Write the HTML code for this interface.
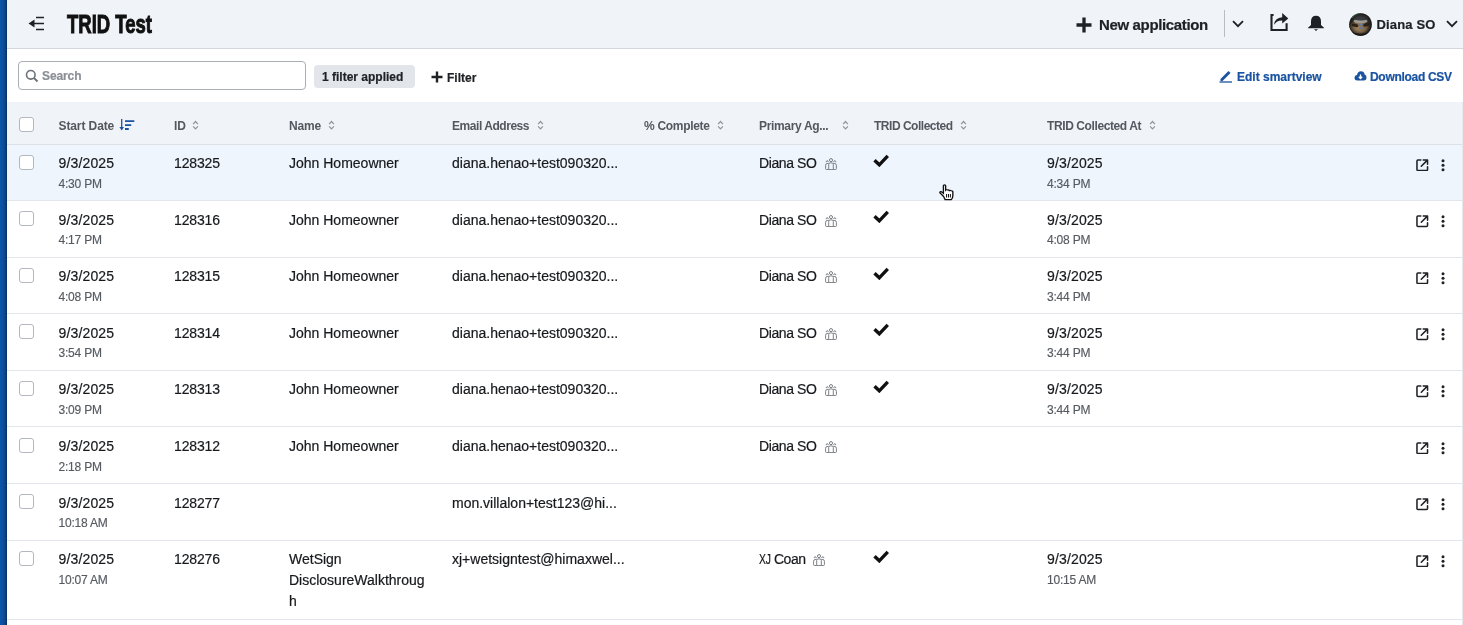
<!DOCTYPE html>
<html><head><meta charset="utf-8">
<style>
*{margin:0;padding:0;box-sizing:border-box}
body{will-change:transform}
html,body{width:1463px;height:625px;overflow:hidden;background:#fff;font-family:"Liberation Sans",sans-serif;color:#1b1d21;position:relative}
.bar{position:absolute;left:0;top:0;width:7px;height:625px;background:linear-gradient(to right,#0c56a8 0,#0b4c99 55%,#093f80 80%,#072d5c 100%);z-index:10}
.hdr{position:absolute;left:0;top:0;width:1463px;height:49px;background:#f0f3f8;border-bottom:1px solid #d3d7dd}
.title{position:absolute;left:66.5px;top:9.1px;font-weight:bold;font-size:26px;line-height:30px;transform:scaleX(0.712);transform-origin:0 0;color:#111;letter-spacing:0;-webkit-text-stroke:1px #111}
.abs{position:absolute}
.btxt{position:absolute;font-weight:bold;white-space:nowrap;-webkit-text-stroke:0.2px currentColor}
.search{position:absolute;left:18px;top:61px;width:288px;height:29px;border:1px solid #a9aeb5;border-radius:4px;background:#fff}
.chip{position:absolute;left:314px;top:65px;width:101px;height:23px;border-radius:4px;background:#e2e5e9}
.th{position:absolute;left:0;top:102px;width:1463px;height:43px;background:#f0f3f8;border-bottom:1px solid #dde1e6}
.hl{position:absolute;top:17px;font-weight:bold;font-size:12px;line-height:14px;color:#53585f;white-space:nowrap;letter-spacing:-0.2px}
.si{position:absolute;top:18.2px}
.cb{position:absolute;width:15px;height:15px;border:1px solid #b3b8bf;border-radius:3px;background:#fff}
.row{position:absolute;left:0;width:1463px;border-bottom:1px solid #e3e6ea;background:#fff}
.row.hov{background:#eef5fd}

.t1{position:absolute;top:9.6px;font-size:14px;line-height:19px;white-space:nowrap;color:#17191c;-webkit-text-stroke:0.2px #17191c}
.dt{letter-spacing:0.15px}
.t2{position:absolute;top:31px;font-size:12px;line-height:16px;white-space:nowrap;color:#555a61;letter-spacing:-0.2px;-webkit-text-stroke:0.15px #555a61}
.tm{display:inline-block;vertical-align:top;margin-left:8px;margin-top:4px;line-height:0}
.ck{position:absolute;top:9px;line-height:0}
.op{position:absolute;left:1416px;top:14.2px;line-height:0}
.kb{position:absolute;left:1441px;top:14px;line-height:0}
.blue{color:#1a53a1}
</style></head><body>
<div class="bar"></div>
<div class="abs" style="left:1462px;top:102px;width:1px;height:523px;background:#e8e9ec;z-index:5"></div>
<div class="hdr">
  <svg class="abs" style="left:28px;top:16px" width="17" height="15" viewBox="0 0 17 15"><path d="M0.5 7.5 L6.5 3.5 V11.5 Z" fill="#1e2125"/><path d="M5 7.5 H16 M8 1.6 H16 M8 13.4 H16" stroke="#1e2125" stroke-width="1.5"/></svg>
  <div class="title">TRID Test</div>
  <svg class="abs" style="left:1076px;top:17px" width="16" height="16" viewBox="0 0 16 16"><path d="M8 0.5 V15.5 M0.5 8 H15.5" stroke="#1e2125" stroke-width="3.3"/></svg>
  <div class="btxt" style="left:1099px;top:16px;font-size:15px;line-height:18px;color:#1e2125;letter-spacing:-0.35px">New application</div>
  <div class="abs" style="left:1224px;top:10px;width:1px;height:27px;background:#b9bdc3"></div>
  <svg class="abs" style="left:1232px;top:20px" width="12" height="8" viewBox="0 0 12 8"><path d="M1 1.2 L6 6.2 L11 1.2" fill="none" stroke="#1e2125" stroke-width="1.8"/></svg>
  <svg class="abs" style="left:1270px;top:12px" width="20" height="20" viewBox="0 0 20 20"><path d="M3.6 3 H1.5 V18 H16.6 V11.3" fill="none" stroke="#1e2125" stroke-width="2.1"/><path d="M4 12.8 Q4.6 5.8 12.2 5.2 V1 L18.3 6.6 L12.2 11.6 V8.4 Q6.8 8.2 4 12.8 Z" fill="#1e2125"/></svg>
  <svg class="abs" style="left:1307px;top:15px" width="18" height="17" viewBox="0 0 18 17"><path d="M9 0.8 Q14 0.8 14 6.5 V10 L17 12.8 V13.3 H1 V12.8 L4 10 V6.5 Q4 0.8 9 0.8 Z" fill="#1e2125"/><path d="M7 14.3 H11 L9 16 Z" fill="#1e2125"/></svg>
  <svg class="abs" style="left:1349px;top:12.5px" width="23" height="23" viewBox="0 0 23 23"><defs><clipPath id="cp"><circle cx="11.5" cy="11.5" r="11.3"/></clipPath><radialGradient id="fg" cx="0.45" cy="0.6" r="0.55"><stop offset="0" stop-color="#9c8362"/><stop offset="0.6" stop-color="#7a6248"/><stop offset="1" stop-color="#3a3028"/></radialGradient><radialGradient id="vg" cx="0.5" cy="0.5" r="0.5"><stop offset="0.6" stop-color="#000" stop-opacity="0"/><stop offset="1" stop-color="#000" stop-opacity="0.55"/></radialGradient></defs><g clip-path="url(#cp)"><rect width="23" height="23" fill="#33302d"/><ellipse cx="11" cy="13.5" rx="10.5" ry="7.5" fill="url(#fg)"/><ellipse cx="11.5" cy="8" rx="7" ry="2.4" fill="#a9a7a2" opacity="0.85"/><ellipse cx="12" cy="4.5" rx="9" ry="3" fill="#3b3b3e"/><ellipse cx="6" cy="12.3" rx="3.4" ry="1.6" fill="#2a2119" transform="rotate(15 6 12.3)"/><ellipse cx="17.3" cy="11.8" rx="3.2" ry="1.6" fill="#2a2119" transform="rotate(-15 17.3 11.8)"/><ellipse cx="12.2" cy="11.8" rx="1.4" ry="1" fill="#5a7fb0"/><ellipse cx="11.8" cy="15.2" rx="1.7" ry="0.9" fill="#5676a8"/><path d="M0 18.5 Q11.5 23 23 18.5 V23 H0 Z" fill="#2e2a26"/><rect width="23" height="23" fill="url(#vg)"/></g><path d="M3 5 A11.2 11.2 0 0 1 9 0.5" fill="none" stroke="#56b883" stroke-width="0.8" opacity="0.6"/></svg>
  <div class="btxt" style="left:1376.5px;top:17px;font-size:13px;line-height:16px;color:#1e2125;letter-spacing:0.15px">Diana SO</div>
  <svg class="abs" style="left:1446px;top:20px" width="12" height="8" viewBox="0 0 12 8"><path d="M1 1.2 L6 6.2 L11 1.2" fill="none" stroke="#1e2125" stroke-width="1.8"/></svg>
</div>
<div class="search"></div>
<svg class="abs" style="left:25px;top:68.8px" width="14" height="14" viewBox="0 0 14 14"><circle cx="5.8" cy="5.8" r="4.3" fill="none" stroke="#6b7078" stroke-width="1.6"/><path d="M9 9 L12.5 12.5" stroke="#6b7078" stroke-width="1.8"/></svg>
<div class="btxt" style="left:42px;top:69px;font-size:12px;line-height:14px;color:#8b9097;letter-spacing:-0.1px">Search</div>
<div class="chip"></div>
<div class="btxt" style="left:322px;top:70px;font-size:12px;line-height:14px;color:#1e2125;letter-spacing:0">1 filter applied</div>
<svg class="abs" style="left:431px;top:71px" width="12" height="12" viewBox="0 0 12 12"><path d="M6 0.5 V11.5 M0.5 6 H11.5" stroke="#1e2125" stroke-width="2.4"/></svg>
<div class="btxt" style="left:447px;top:70.7px;font-size:12px;line-height:14px;color:#1e2125">Filter</div>
<svg class="abs" style="left:1219px;top:69px" width="14" height="14" viewBox="0 0 14 14"><path d="M1.5 10 L9.5 2 L11.5 4 L3.5 12 H1.5 Z" fill="#1a53a1"/><path d="M0.5 13 H13" stroke="#1a53a1" stroke-width="1.3"/></svg>
<div class="btxt blue" style="left:1237px;top:69.5px;font-size:12px;line-height:14px;letter-spacing:0">Edit smartview</div>
<svg class="abs" style="left:1354px;top:70px" width="13" height="12" viewBox="0 0 13 12"><path d="M3.2 10.5 Q0.5 10.5 0.5 7.8 Q0.5 5.3 3 5.1 Q3.6 1.3 7 1.3 Q10.2 1.3 10.6 4.6 Q12.5 5 12.5 7.6 Q12.5 10.5 9.8 10.5 Z" fill="#1a53a1"/><path d="M6.5 4.5 V8.3 M4.8 6.8 L6.5 8.6 L8.2 6.8" fill="none" stroke="#fff" stroke-width="1.3"/></svg>
<div class="btxt blue" style="left:1370px;top:69.5px;font-size:12px;line-height:14px;letter-spacing:-0.3px">Download CSV</div>

<div class="th">
  <div class="cb" style="left:19px;top:15px"></div>
  <div class="hl" style="left:58.5px;letter-spacing:-0.1px">Start Date</div>
  <svg class="abs" style="left:119px;top:14.7px" width="16" height="14" viewBox="0 0 16 14"><path d="M2.7 2 V12" stroke="#1a53a1" stroke-width="1.3"/><path d="M0.4 10 L2.7 13.5 L5 10 Z" fill="#1a53a1"/><path d="M6 4.2 H15.3 M6 8.2 H12.2 M6 12 H9.8" stroke="#1a53a1" stroke-width="1.8"/></svg>
  <div class="hl" style="left:174px">ID</div><svg class="si" style="left:192px" width="7" height="10" viewBox="0 0 7 10"><path d="M1.1 4.1 L3.5 1.5 L5.9 4.1 M1.1 6.3 L3.5 8.9 L5.9 6.3" fill="none" stroke="#92969c" stroke-width="1.25"/></svg>
  <div class="hl" style="left:289px">Name</div><svg class="si" style="left:328px" width="7" height="10" viewBox="0 0 7 10"><path d="M1.1 4.1 L3.5 1.5 L5.9 4.1 M1.1 6.3 L3.5 8.9 L5.9 6.3" fill="none" stroke="#92969c" stroke-width="1.25"/></svg>
  <div class="hl" style="left:452px;letter-spacing:-0.45px">Email Address</div><svg class="si" style="left:536.5px" width="7" height="10" viewBox="0 0 7 10"><path d="M1.1 4.1 L3.5 1.5 L5.9 4.1 M1.1 6.3 L3.5 8.9 L5.9 6.3" fill="none" stroke="#92969c" stroke-width="1.25"/></svg>
  <div class="hl" style="left:644px;letter-spacing:-0.3px">% Complete</div><svg class="si" style="left:716.5px" width="7" height="10" viewBox="0 0 7 10"><path d="M1.1 4.1 L3.5 1.5 L5.9 4.1 M1.1 6.3 L3.5 8.9 L5.9 6.3" fill="none" stroke="#92969c" stroke-width="1.25"/></svg>
  <div class="hl" style="left:759px;letter-spacing:-0.33px">Primary Ag...</div><svg class="si" style="left:841.5px" width="7" height="10" viewBox="0 0 7 10"><path d="M1.1 4.1 L3.5 1.5 L5.9 4.1 M1.1 6.3 L3.5 8.9 L5.9 6.3" fill="none" stroke="#92969c" stroke-width="1.25"/></svg>
  <div class="hl" style="left:874px;letter-spacing:-0.48px">TRID Collected</div><svg class="si" style="left:960px" width="7" height="10" viewBox="0 0 7 10"><path d="M1.1 4.1 L3.5 1.5 L5.9 4.1 M1.1 6.3 L3.5 8.9 L5.9 6.3" fill="none" stroke="#92969c" stroke-width="1.25"/></svg>
  <div class="hl" style="left:1047px;letter-spacing:-0.4px">TRID Collected At</div><svg class="si" style="left:1149px" width="7" height="10" viewBox="0 0 7 10"><path d="M1.1 4.1 L3.5 1.5 L5.9 4.1 M1.1 6.3 L3.5 8.9 L5.9 6.3" fill="none" stroke="#92969c" stroke-width="1.25"/></svg>
</div>
<div class="row hov" style="top:144.5px;height:56.6px"><div class="cb" style="left:19px;top:10px"></div><div class="t1 dt" style="left:58.5px">9/3/2025</div><div class="t2" style="left:58.5px">4:30 PM</div><div class="t1" style="left:174px;letter-spacing:-0.15px">128325</div><div class="t1" style="left:289px;top:9.6px">John Homeowner</div><div class="t1" style="left:452px">diana.henao+test090320...</div><div class="t1 ag" style="left:759px"><span style="letter-spacing:-0.4px">Diana SO</span><span class="tm"><svg width="12" height="12" viewBox="0 0 12 12" fill="none" stroke="#74797f" stroke-width="0.95" stroke-linejoin="round"><circle cx="6" cy="2.1" r="1.55"/><path d="M3.7 11.6 V6.4 Q3.7 4.8 6 4.8 Q8.3 4.8 8.3 6.4 V11.6 Z"/><path d="M3.3 4.2 Q3.2 2.6 2.2 2.7 Q1.1 2.8 1.2 4.2 M8.7 4.2 Q8.8 2.6 9.8 2.7 Q10.9 2.8 10.8 4.2"/><path d="M3.7 5.5 H2.1 Q0.6 5.6 0.6 7.3 V10.6 Q0.6 11.5 1.4 11.5 H3.7 M8.3 5.5 H9.9 Q11.4 5.6 11.4 7.3 V10.6 Q11.4 11.5 10.6 11.5 H8.3"/></svg></span></div><div class="ck" style="left:873px"><svg width="16" height="13" viewBox="0 0 16 13"><path d="M1.5 6.3 L6.3 10.8 L14.8 1.8" fill="none" stroke="#111" stroke-width="3.4"/></svg></div><div class="t1 dt" style="left:1047px">9/3/2025</div><div class="t2" style="left:1047px">4:34 PM</div><div class="op"><svg width="12.5" height="12.5" viewBox="0 0 13 13" fill="none" stroke="#1e2125" stroke-width="1.6" stroke-linejoin="round" stroke-linecap="round"><path d="M5 1 H2 Q1 1 1 2 V11 Q1 12 2 12 H11 Q12 12 12 11 V8"/><path d="M7.5 1 H12 V5.5 M11.8 1.2 L5.5 7.5"/></svg></div><div class="kb"><svg width="4" height="13" viewBox="0 0 4 13"><circle cx="2" cy="1.8" r="1.5" fill="#1e2125"/><circle cx="2" cy="6.3" r="1.5" fill="#1e2125"/><circle cx="2" cy="10.8" r="1.5" fill="#1e2125"/></svg></div></div>
<div class="row" style="top:201.1px;height:56.6px"><div class="cb" style="left:19px;top:10px"></div><div class="t1 dt" style="left:58.5px">9/3/2025</div><div class="t2" style="left:58.5px">4:17 PM</div><div class="t1" style="left:174px;letter-spacing:-0.15px">128316</div><div class="t1" style="left:289px;top:9.6px">John Homeowner</div><div class="t1" style="left:452px">diana.henao+test090320...</div><div class="t1 ag" style="left:759px"><span style="letter-spacing:-0.4px">Diana SO</span><span class="tm"><svg width="12" height="12" viewBox="0 0 12 12" fill="none" stroke="#74797f" stroke-width="0.95" stroke-linejoin="round"><circle cx="6" cy="2.1" r="1.55"/><path d="M3.7 11.6 V6.4 Q3.7 4.8 6 4.8 Q8.3 4.8 8.3 6.4 V11.6 Z"/><path d="M3.3 4.2 Q3.2 2.6 2.2 2.7 Q1.1 2.8 1.2 4.2 M8.7 4.2 Q8.8 2.6 9.8 2.7 Q10.9 2.8 10.8 4.2"/><path d="M3.7 5.5 H2.1 Q0.6 5.6 0.6 7.3 V10.6 Q0.6 11.5 1.4 11.5 H3.7 M8.3 5.5 H9.9 Q11.4 5.6 11.4 7.3 V10.6 Q11.4 11.5 10.6 11.5 H8.3"/></svg></span></div><div class="ck" style="left:873px"><svg width="16" height="13" viewBox="0 0 16 13"><path d="M1.5 6.3 L6.3 10.8 L14.8 1.8" fill="none" stroke="#111" stroke-width="3.4"/></svg></div><div class="t1 dt" style="left:1047px">9/3/2025</div><div class="t2" style="left:1047px">4:08 PM</div><div class="op"><svg width="12.5" height="12.5" viewBox="0 0 13 13" fill="none" stroke="#1e2125" stroke-width="1.6" stroke-linejoin="round" stroke-linecap="round"><path d="M5 1 H2 Q1 1 1 2 V11 Q1 12 2 12 H11 Q12 12 12 11 V8"/><path d="M7.5 1 H12 V5.5 M11.8 1.2 L5.5 7.5"/></svg></div><div class="kb"><svg width="4" height="13" viewBox="0 0 4 13"><circle cx="2" cy="1.8" r="1.5" fill="#1e2125"/><circle cx="2" cy="6.3" r="1.5" fill="#1e2125"/><circle cx="2" cy="10.8" r="1.5" fill="#1e2125"/></svg></div></div>
<div class="row" style="top:257.7px;height:56.6px"><div class="cb" style="left:19px;top:10px"></div><div class="t1 dt" style="left:58.5px">9/3/2025</div><div class="t2" style="left:58.5px">4:08 PM</div><div class="t1" style="left:174px;letter-spacing:-0.15px">128315</div><div class="t1" style="left:289px;top:9.6px">John Homeowner</div><div class="t1" style="left:452px">diana.henao+test090320...</div><div class="t1 ag" style="left:759px"><span style="letter-spacing:-0.4px">Diana SO</span><span class="tm"><svg width="12" height="12" viewBox="0 0 12 12" fill="none" stroke="#74797f" stroke-width="0.95" stroke-linejoin="round"><circle cx="6" cy="2.1" r="1.55"/><path d="M3.7 11.6 V6.4 Q3.7 4.8 6 4.8 Q8.3 4.8 8.3 6.4 V11.6 Z"/><path d="M3.3 4.2 Q3.2 2.6 2.2 2.7 Q1.1 2.8 1.2 4.2 M8.7 4.2 Q8.8 2.6 9.8 2.7 Q10.9 2.8 10.8 4.2"/><path d="M3.7 5.5 H2.1 Q0.6 5.6 0.6 7.3 V10.6 Q0.6 11.5 1.4 11.5 H3.7 M8.3 5.5 H9.9 Q11.4 5.6 11.4 7.3 V10.6 Q11.4 11.5 10.6 11.5 H8.3"/></svg></span></div><div class="ck" style="left:873px"><svg width="16" height="13" viewBox="0 0 16 13"><path d="M1.5 6.3 L6.3 10.8 L14.8 1.8" fill="none" stroke="#111" stroke-width="3.4"/></svg></div><div class="t1 dt" style="left:1047px">9/3/2025</div><div class="t2" style="left:1047px">3:44 PM</div><div class="op"><svg width="12.5" height="12.5" viewBox="0 0 13 13" fill="none" stroke="#1e2125" stroke-width="1.6" stroke-linejoin="round" stroke-linecap="round"><path d="M5 1 H2 Q1 1 1 2 V11 Q1 12 2 12 H11 Q12 12 12 11 V8"/><path d="M7.5 1 H12 V5.5 M11.8 1.2 L5.5 7.5"/></svg></div><div class="kb"><svg width="4" height="13" viewBox="0 0 4 13"><circle cx="2" cy="1.8" r="1.5" fill="#1e2125"/><circle cx="2" cy="6.3" r="1.5" fill="#1e2125"/><circle cx="2" cy="10.8" r="1.5" fill="#1e2125"/></svg></div></div>
<div class="row" style="top:314.3px;height:56.6px"><div class="cb" style="left:19px;top:10px"></div><div class="t1 dt" style="left:58.5px">9/3/2025</div><div class="t2" style="left:58.5px">3:54 PM</div><div class="t1" style="left:174px;letter-spacing:-0.15px">128314</div><div class="t1" style="left:289px;top:9.6px">John Homeowner</div><div class="t1" style="left:452px">diana.henao+test090320...</div><div class="t1 ag" style="left:759px"><span style="letter-spacing:-0.4px">Diana SO</span><span class="tm"><svg width="12" height="12" viewBox="0 0 12 12" fill="none" stroke="#74797f" stroke-width="0.95" stroke-linejoin="round"><circle cx="6" cy="2.1" r="1.55"/><path d="M3.7 11.6 V6.4 Q3.7 4.8 6 4.8 Q8.3 4.8 8.3 6.4 V11.6 Z"/><path d="M3.3 4.2 Q3.2 2.6 2.2 2.7 Q1.1 2.8 1.2 4.2 M8.7 4.2 Q8.8 2.6 9.8 2.7 Q10.9 2.8 10.8 4.2"/><path d="M3.7 5.5 H2.1 Q0.6 5.6 0.6 7.3 V10.6 Q0.6 11.5 1.4 11.5 H3.7 M8.3 5.5 H9.9 Q11.4 5.6 11.4 7.3 V10.6 Q11.4 11.5 10.6 11.5 H8.3"/></svg></span></div><div class="ck" style="left:873px"><svg width="16" height="13" viewBox="0 0 16 13"><path d="M1.5 6.3 L6.3 10.8 L14.8 1.8" fill="none" stroke="#111" stroke-width="3.4"/></svg></div><div class="t1 dt" style="left:1047px">9/3/2025</div><div class="t2" style="left:1047px">3:44 PM</div><div class="op"><svg width="12.5" height="12.5" viewBox="0 0 13 13" fill="none" stroke="#1e2125" stroke-width="1.6" stroke-linejoin="round" stroke-linecap="round"><path d="M5 1 H2 Q1 1 1 2 V11 Q1 12 2 12 H11 Q12 12 12 11 V8"/><path d="M7.5 1 H12 V5.5 M11.8 1.2 L5.5 7.5"/></svg></div><div class="kb"><svg width="4" height="13" viewBox="0 0 4 13"><circle cx="2" cy="1.8" r="1.5" fill="#1e2125"/><circle cx="2" cy="6.3" r="1.5" fill="#1e2125"/><circle cx="2" cy="10.8" r="1.5" fill="#1e2125"/></svg></div></div>
<div class="row" style="top:370.9px;height:56.6px"><div class="cb" style="left:19px;top:10px"></div><div class="t1 dt" style="left:58.5px">9/3/2025</div><div class="t2" style="left:58.5px">3:09 PM</div><div class="t1" style="left:174px;letter-spacing:-0.15px">128313</div><div class="t1" style="left:289px;top:9.6px">John Homeowner</div><div class="t1" style="left:452px">diana.henao+test090320...</div><div class="t1 ag" style="left:759px"><span style="letter-spacing:-0.4px">Diana SO</span><span class="tm"><svg width="12" height="12" viewBox="0 0 12 12" fill="none" stroke="#74797f" stroke-width="0.95" stroke-linejoin="round"><circle cx="6" cy="2.1" r="1.55"/><path d="M3.7 11.6 V6.4 Q3.7 4.8 6 4.8 Q8.3 4.8 8.3 6.4 V11.6 Z"/><path d="M3.3 4.2 Q3.2 2.6 2.2 2.7 Q1.1 2.8 1.2 4.2 M8.7 4.2 Q8.8 2.6 9.8 2.7 Q10.9 2.8 10.8 4.2"/><path d="M3.7 5.5 H2.1 Q0.6 5.6 0.6 7.3 V10.6 Q0.6 11.5 1.4 11.5 H3.7 M8.3 5.5 H9.9 Q11.4 5.6 11.4 7.3 V10.6 Q11.4 11.5 10.6 11.5 H8.3"/></svg></span></div><div class="ck" style="left:873px"><svg width="16" height="13" viewBox="0 0 16 13"><path d="M1.5 6.3 L6.3 10.8 L14.8 1.8" fill="none" stroke="#111" stroke-width="3.4"/></svg></div><div class="t1 dt" style="left:1047px">9/3/2025</div><div class="t2" style="left:1047px">3:44 PM</div><div class="op"><svg width="12.5" height="12.5" viewBox="0 0 13 13" fill="none" stroke="#1e2125" stroke-width="1.6" stroke-linejoin="round" stroke-linecap="round"><path d="M5 1 H2 Q1 1 1 2 V11 Q1 12 2 12 H11 Q12 12 12 11 V8"/><path d="M7.5 1 H12 V5.5 M11.8 1.2 L5.5 7.5"/></svg></div><div class="kb"><svg width="4" height="13" viewBox="0 0 4 13"><circle cx="2" cy="1.8" r="1.5" fill="#1e2125"/><circle cx="2" cy="6.3" r="1.5" fill="#1e2125"/><circle cx="2" cy="10.8" r="1.5" fill="#1e2125"/></svg></div></div>
<div class="row" style="top:427.5px;height:56.6px"><div class="cb" style="left:19px;top:10px"></div><div class="t1 dt" style="left:58.5px">9/3/2025</div><div class="t2" style="left:58.5px">2:18 PM</div><div class="t1" style="left:174px;letter-spacing:-0.15px">128312</div><div class="t1" style="left:289px;top:9.6px">John Homeowner</div><div class="t1" style="left:452px">diana.henao+test090320...</div><div class="t1 ag" style="left:759px"><span style="letter-spacing:-0.4px">Diana SO</span><span class="tm"><svg width="12" height="12" viewBox="0 0 12 12" fill="none" stroke="#74797f" stroke-width="0.95" stroke-linejoin="round"><circle cx="6" cy="2.1" r="1.55"/><path d="M3.7 11.6 V6.4 Q3.7 4.8 6 4.8 Q8.3 4.8 8.3 6.4 V11.6 Z"/><path d="M3.3 4.2 Q3.2 2.6 2.2 2.7 Q1.1 2.8 1.2 4.2 M8.7 4.2 Q8.8 2.6 9.8 2.7 Q10.9 2.8 10.8 4.2"/><path d="M3.7 5.5 H2.1 Q0.6 5.6 0.6 7.3 V10.6 Q0.6 11.5 1.4 11.5 H3.7 M8.3 5.5 H9.9 Q11.4 5.6 11.4 7.3 V10.6 Q11.4 11.5 10.6 11.5 H8.3"/></svg></span></div><div class="op"><svg width="12.5" height="12.5" viewBox="0 0 13 13" fill="none" stroke="#1e2125" stroke-width="1.6" stroke-linejoin="round" stroke-linecap="round"><path d="M5 1 H2 Q1 1 1 2 V11 Q1 12 2 12 H11 Q12 12 12 11 V8"/><path d="M7.5 1 H12 V5.5 M11.8 1.2 L5.5 7.5"/></svg></div><div class="kb"><svg width="4" height="13" viewBox="0 0 4 13"><circle cx="2" cy="1.8" r="1.5" fill="#1e2125"/><circle cx="2" cy="6.3" r="1.5" fill="#1e2125"/><circle cx="2" cy="10.8" r="1.5" fill="#1e2125"/></svg></div></div>
<div class="row" style="top:484.1px;height:56.6px"><div class="cb" style="left:19px;top:10px"></div><div class="t1 dt" style="left:58.5px">9/3/2025</div><div class="t2" style="left:58.5px">10:18 AM</div><div class="t1" style="left:174px;letter-spacing:-0.15px">128277</div><div class="t1" style="left:452px">mon.villalon+test123@hi...</div><div class="op"><svg width="12.5" height="12.5" viewBox="0 0 13 13" fill="none" stroke="#1e2125" stroke-width="1.6" stroke-linejoin="round" stroke-linecap="round"><path d="M5 1 H2 Q1 1 1 2 V11 Q1 12 2 12 H11 Q12 12 12 11 V8"/><path d="M7.5 1 H12 V5.5 M11.8 1.2 L5.5 7.5"/></svg></div><div class="kb"><svg width="4" height="13" viewBox="0 0 4 13"><circle cx="2" cy="1.8" r="1.5" fill="#1e2125"/><circle cx="2" cy="6.3" r="1.5" fill="#1e2125"/><circle cx="2" cy="10.8" r="1.5" fill="#1e2125"/></svg></div></div>
<div class="row" style="top:540.7px;height:79.79999999999995px"><div class="cb" style="left:19px;top:10px"></div><div class="t1 dt" style="left:58.5px">9/3/2025</div><div class="t2" style="left:58.5px">10:07 AM</div><div class="t1" style="left:174px;letter-spacing:-0.15px">128276</div><div class="t1" style="left:289px;top:9.6px">WetSign</div><div class="t1" style="left:289px;top:30.700000000000003px">DisclosureWalkthroug</div><div class="t1" style="left:289px;top:51.800000000000004px">h</div><div class="t1" style="left:452px">xj+wetsigntest@himaxwel...</div><div class="t1 ag" style="left:759px"><span style="display:inline-block;width:15px"><span style="display:inline-block;transform:scaleX(0.74);transform-origin:0 0;letter-spacing:-0.3px">XJ</span></span><span style="letter-spacing:-0.5px">Coan</span><span class="tm"><svg width="12" height="12" viewBox="0 0 12 12" fill="none" stroke="#74797f" stroke-width="0.95" stroke-linejoin="round"><circle cx="6" cy="2.1" r="1.55"/><path d="M3.7 11.6 V6.4 Q3.7 4.8 6 4.8 Q8.3 4.8 8.3 6.4 V11.6 Z"/><path d="M3.3 4.2 Q3.2 2.6 2.2 2.7 Q1.1 2.8 1.2 4.2 M8.7 4.2 Q8.8 2.6 9.8 2.7 Q10.9 2.8 10.8 4.2"/><path d="M3.7 5.5 H2.1 Q0.6 5.6 0.6 7.3 V10.6 Q0.6 11.5 1.4 11.5 H3.7 M8.3 5.5 H9.9 Q11.4 5.6 11.4 7.3 V10.6 Q11.4 11.5 10.6 11.5 H8.3"/></svg></span></div><div class="ck" style="left:873px"><svg width="16" height="13" viewBox="0 0 16 13"><path d="M1.5 6.3 L6.3 10.8 L14.8 1.8" fill="none" stroke="#111" stroke-width="3.4"/></svg></div><div class="t1 dt" style="left:1047px">9/3/2025</div><div class="t2" style="left:1047px">10:15 AM</div><div class="op"><svg width="12.5" height="12.5" viewBox="0 0 13 13" fill="none" stroke="#1e2125" stroke-width="1.6" stroke-linejoin="round" stroke-linecap="round"><path d="M5 1 H2 Q1 1 1 2 V11 Q1 12 2 12 H11 Q12 12 12 11 V8"/><path d="M7.5 1 H12 V5.5 M11.8 1.2 L5.5 7.5"/></svg></div><div class="kb"><svg width="4" height="13" viewBox="0 0 4 13"><circle cx="2" cy="1.8" r="1.5" fill="#1e2125"/><circle cx="2" cy="6.3" r="1.5" fill="#1e2125"/><circle cx="2" cy="10.8" r="1.5" fill="#1e2125"/></svg></div></div>
<svg class="abs" style="left:938px;top:184px" width="18" height="17" viewBox="0 0 16 17" preserveAspectRatio="none"><path d="M5 12.5 L1.8 9 Q1.3 8 2.3 7.6 Q3 7.4 3.8 8.3 L4.8 9.3 V1.8 Q4.8 0.8 5.8 0.8 Q6.8 0.8 6.8 1.8 V6.2 Q7.4 5.5 8.3 5.9 Q9.5 5.5 10 6.6 Q11 6.1 11.8 6.8 Q13 6.6 13.2 7.8 V11.5 Q13.2 14 11.8 15.6 H6.3 Z" fill="#fff" stroke="#111" stroke-width="1.2"/><path d="M7.6 10 V13.5 M9.3 10 V13.5 M11 10 V13.5" stroke="#111" stroke-width="0.9"/></svg>
</body></html>
